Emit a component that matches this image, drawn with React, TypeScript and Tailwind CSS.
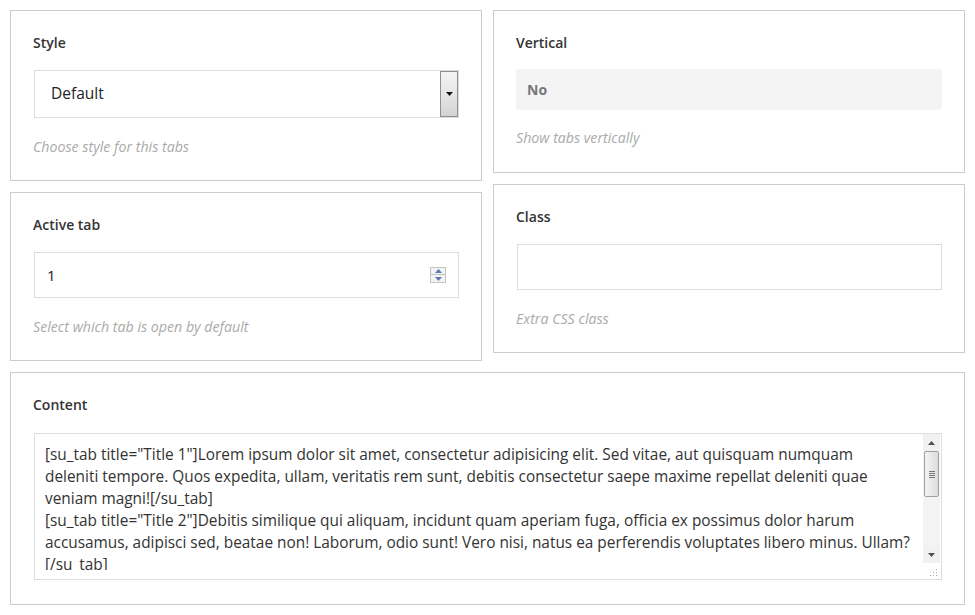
const font = { fontFamily: '"Open Sans", "Liberation Sans", sans-serif' };

function Box({
  label,
  help,
  children,
}: {
  label: string;
  help?: string;
  children: React.ReactNode;
}) {
  return (
    <div className="border border-[#cccccc] bg-white px-[22px] pt-[22px] pb-[23px]">
      <div className="text-[14px] leading-[20px] font-semibold text-[#333]">{label}</div>
      <div className="mt-[17px] pl-[1px]">{children}</div>
      {help && (
        <div className="mt-[19px] text-[14.2px] leading-[20px] italic text-[#aaaaaa]">{help}</div>
      )}
    </div>
  );
}

function SelectBox() {
  return (
    <div className="flex h-[48px] items-stretch border border-[#dddddd] bg-white">
      <div className="flex flex-1 items-center pl-[16px] text-[15.5px] text-[#222]">Default</div>
      <div className="flex w-[18px] items-center justify-center border border-[#8f8f8f] bg-gradient-to-b from-[#f4f4f4] via-[#e6e6e6] to-[#d3d3d3]">
        <svg width="7" height="4" viewBox="0 0 7 4">
          <path d="M0 0h7L3.5 4z" fill="#111" />
        </svg>
      </div>
    </div>
  );
}

function NumberBox() {
  return (
    <div className="flex h-[46px] items-center border border-[#dddddd] bg-white pl-[12px] pr-[12px]">
      <div className="flex-1 text-[15px] text-[#222]">1</div>
      <div className="flex w-[16px] flex-col">
        <div className="flex h-[8px] items-center justify-center border border-[#c4c4c4] bg-[#f3f3f3]">
          <svg width="7" height="4" viewBox="0 0 7 4">
            <path d="M3.5 0L7 4H0z" fill="#5a78b8" />
          </svg>
        </div>
        <div className="flex h-[8px] items-center justify-center border border-t-0 border-[#c4c4c4] bg-[#f3f3f3]">
          <svg width="7" height="4" viewBox="0 0 7 4">
            <path d="M0 0h7L3.5 4z" fill="#5a78b8" />
          </svg>
        </div>
      </div>
    </div>
  );
}

const lines = [
  '[su_tab title="Title 1"]Lorem ipsum dolor sit amet, consectetur adipisicing elit. Sed vitae, aut quisquam numquam',
  "deleniti tempore. Quos expedita, ullam, veritatis rem sunt, debitis consectetur saepe maxime repellat deleniti quae",
  "veniam magni![/su_tab]",
  '[su_tab title="Title 2"]Debitis similique qui aliquam, incidunt quam aperiam fuga, officia ex possimus dolor harum',
  "accusamus, adipisci sed, beatae non! Laborum, odio sunt! Vero nisi, natus ea perferendis voluptates libero minus. Ullam?",
  "[/su_tab]",
];

function TextArea() {
  return (
    <div className="flex h-[147px] border border-[#dddddd] bg-white">
      <div className="flex-1 pl-[10px] pt-[10px]">
        <div className="h-[126px] overflow-hidden text-[15.4px] leading-[22px] text-[#333]">
          {lines.map((l, i) => (
            <div key={i} className="whitespace-nowrap">
              {l}
            </div>
          ))}
        </div>
      </div>
      {/* scrollbar */}
      <div className="flex w-[17px] flex-col">
        <div className="flex h-[17px] items-center justify-center bg-[#f1f1f1]">
          <svg width="7" height="4" viewBox="0 0 7 4">
            <path d="M3.5 0L7 4H0z" fill="#505050" />
          </svg>
        </div>
        <div className="flex-1 bg-[#f3f3f3]">
          <div className="mx-[1px] flex h-[46px] items-center justify-center rounded-[2px] border border-[#a0a0a0] bg-gradient-to-r from-[#f4f4f4] to-[#dcdcdc]">
            <div className="flex flex-col gap-[1px]">
              <div className="h-[1px] w-[6px] bg-[#777]" />
              <div className="h-[1px] w-[6px] bg-[#777]" />
              <div className="h-[1px] w-[6px] bg-[#777]" />
              <div className="h-[1px] w-[6px] bg-[#777]" />
            </div>
          </div>
        </div>
        <div className="flex h-[17px] items-center justify-center bg-[#f1f1f1]">
          <svg width="7" height="4" viewBox="0 0 7 4">
            <path d="M0 0h7L3.5 4z" fill="#505050" />
          </svg>
        </div>
        <div className="flex h-[16px] items-end justify-end bg-white p-[2px]">
          <svg width="8" height="8" viewBox="0 0 8 8">
            <rect x="6" y="0" width="1" height="1" fill="#aaa" />
            <rect x="6" y="3" width="1" height="1" fill="#aaa" />
            <rect x="6" y="6" width="1" height="1" fill="#aaa" />
            <rect x="3" y="3" width="1" height="1" fill="#aaa" />
            <rect x="3" y="6" width="1" height="1" fill="#aaa" />
            <rect x="0" y="6" width="1" height="1" fill="#aaa" />
          </svg>
        </div>
      </div>
      <div className="w-[1px]" />
    </div>
  );
}

export default function App() {
  return (
    <div className="min-h-screen bg-white p-[10px]" style={font}>
      <div className="flex flex-col gap-[11px]">
        <div className="grid grid-cols-2 items-start gap-[11px]">
          <div className="flex flex-col gap-[11px]">
            <Box label="Style" help="Choose style for this tabs">
              <SelectBox />
            </Box>
            <Box label="Active tab" help="Select which tab is open by default">
              <NumberBox />
            </Box>
          </div>
          <div className="flex flex-col gap-[11px]">
            <div className="border border-[#cccccc] bg-white px-[22px] pt-[22px] pb-[24px]">
              <div className="text-[14px] leading-[20px] font-semibold text-[#333]">Vertical</div>
              <div className="mt-[16px] flex h-[41px] items-center rounded-[3px] bg-[#f4f4f4] pl-[11px] text-[14px] font-bold text-[#777]">
                No
              </div>
              <div className="mt-[18px] text-[14.2px] leading-[20px] italic text-[#aaaaaa]">
                Show tabs vertically
              </div>
            </div>
            <Box label="Class" help="Extra CSS class">
              <div className="h-[46px] border border-[#dddddd] bg-white" />
            </Box>
          </div>
        </div>
        <div className="border border-[#cccccc] bg-white px-[22px] pt-[22px] pb-[24px]">
          <div className="text-[14px] leading-[20px] font-semibold text-[#333]">Content</div>
          <div className="mt-[18px] pl-[1px]">
            <TextArea />
          </div>
        </div>
      </div>
    </div>
  );
}
